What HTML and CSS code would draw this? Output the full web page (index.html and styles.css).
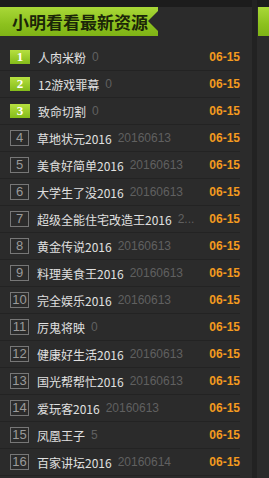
FILE: index.html
```html
<!DOCTYPE html>
<html>
<head>
<meta charset="utf-8">
<link rel="stylesheet" href="styles.css">
</head>
<body>
<div class="page">
  <div class="panel">
    <div class="head">
      <div class="tab"><span class="title">小明看看最新资源</span><span class="notch"></span></div>
    </div>
    <ul class="list">
      <li class="row"><span class="num top">1</span><span class="name">人肉米粉</span><span class="cnt">0</span><span class="date">06-15</span></li>
      <li class="row"><span class="num top">2</span><span class="name">12游戏罪幕</span><span class="cnt">0</span><span class="date">06-15</span></li>
      <li class="row"><span class="num top">3</span><span class="name">致命切割</span><span class="cnt">0</span><span class="date">06-15</span></li>
      <li class="row"><span class="num">4</span><span class="name">草地状元2016</span><span class="cnt">20160613</span><span class="date">06-15</span></li>
      <li class="row"><span class="num">5</span><span class="name">美食好简单2016</span><span class="cnt">20160613</span><span class="date">06-15</span></li>
      <li class="row"><span class="num">6</span><span class="name">大学生了没2016</span><span class="cnt">20160613</span><span class="date">06-15</span></li>
      <li class="row"><span class="num">7</span><span class="name">超级全能住宅改造王2016</span><span class="cnt">2...</span><span class="date">06-15</span></li>
      <li class="row"><span class="num">8</span><span class="name">黄金传说2016</span><span class="cnt">20160613</span><span class="date">06-15</span></li>
      <li class="row"><span class="num">9</span><span class="name">料理美食王2016</span><span class="cnt">20160613</span><span class="date">06-15</span></li>
      <li class="row"><span class="num">10</span><span class="name">完全娱乐2016</span><span class="cnt">20160613</span><span class="date">06-15</span></li>
      <li class="row"><span class="num">11</span><span class="name">厉鬼将映</span><span class="cnt">0</span><span class="date">06-15</span></li>
      <li class="row"><span class="num">12</span><span class="name">健康好生活2016</span><span class="cnt">20160613</span><span class="date">06-15</span></li>
      <li class="row"><span class="num">13</span><span class="name">国光帮帮忙2016</span><span class="cnt">20160613</span><span class="date">06-15</span></li>
      <li class="row"><span class="num">14</span><span class="name">爱玩客2016</span><span class="cnt">20160613</span><span class="date">06-15</span></li>
      <li class="row"><span class="num">15</span><span class="name">凤凰王子</span><span class="cnt">5</span><span class="date">06-15</span></li>
      <li class="row"><span class="num">16</span><span class="name">百家讲坛2016</span><span class="cnt">20160614</span><span class="date">06-15</span></li>
    </ul>
  </div>
  <div class="gutter"></div>
  <div class="panel side">
    <div class="head"><div class="tab2"></div></div>
  </div>
</div>
</body>
</html>
```
FILE: styles.css
```css
* { box-sizing: border-box; }
html, body { margin: 0; padding: 0; background: #2b2b2b; }
body { font-family: "Noto Sans CJK SC", "Microsoft YaHei", sans-serif; font-size: 12px; }
.page { display: flex; width: 269px; height: 478px; overflow: hidden; }
.panel { width: 252px; flex: none; background: #2b2b2b; }
.panel.side { width: 20px; }
.gutter { width: 5px; flex: none; background: #222; }
.head { height: 36px; padding-top: 7px; background: linear-gradient(#1c1c1c 0 7px, #2b2b2b 7px); }
.tab { position: relative; width: 158px; height: 29px; background: linear-gradient(#a9d838, #8cc11e 60%, #7fb316); display: flex; align-items: center; padding-left: 12px; }
.title { font-weight: bold; font-size: 17px; color: #1b2608; line-height: 1; font-family: "Noto Sans CJK SC", serif; }
.notch { position: absolute; right: 0; top: 4px; width: 0; height: 0; border-top: 10px solid transparent; border-bottom: 10px solid transparent; border-right: 10px solid #2b2b2b; }
.tab2 { width: 20px; height: 29px; margin-left: 1px; background: linear-gradient(#a9d838, #8cc11e 60%, #7fb316); }
.list { list-style: none; margin: 0; padding: 8px 0 0 0; }
.row { display: flex; align-items: center; height: 27px; margin: 0 12px 0 0; border-bottom: 1px solid #232323; padding-left: 10px; color: #ddd; white-space: nowrap; }
.num { flex: none; width: 19px; height: 16px; border: 1px solid #777; color: #9a9a9a; font-size: 13px; line-height: 14px; text-align: center; font-family: "Liberation Sans", sans-serif; }
.num.top { height: 14px; width: 20px; border: none; background: linear-gradient(#b6e040, #84bb1a); color: #fff; font-weight: bold; font-family: "Liberation Serif", serif; font-size: 13px; line-height: 14px; }
.name { margin-left: 8px; color: #e0e0e0; }
.cnt { margin-left: 6px; color: #606060; font-family: "Liberation Sans", sans-serif; }
.date { margin-left: auto; padding-left: 6px; flex: none; color: #f39a1f; font-weight: bold; font-family: "Liberation Sans", sans-serif; }
```
